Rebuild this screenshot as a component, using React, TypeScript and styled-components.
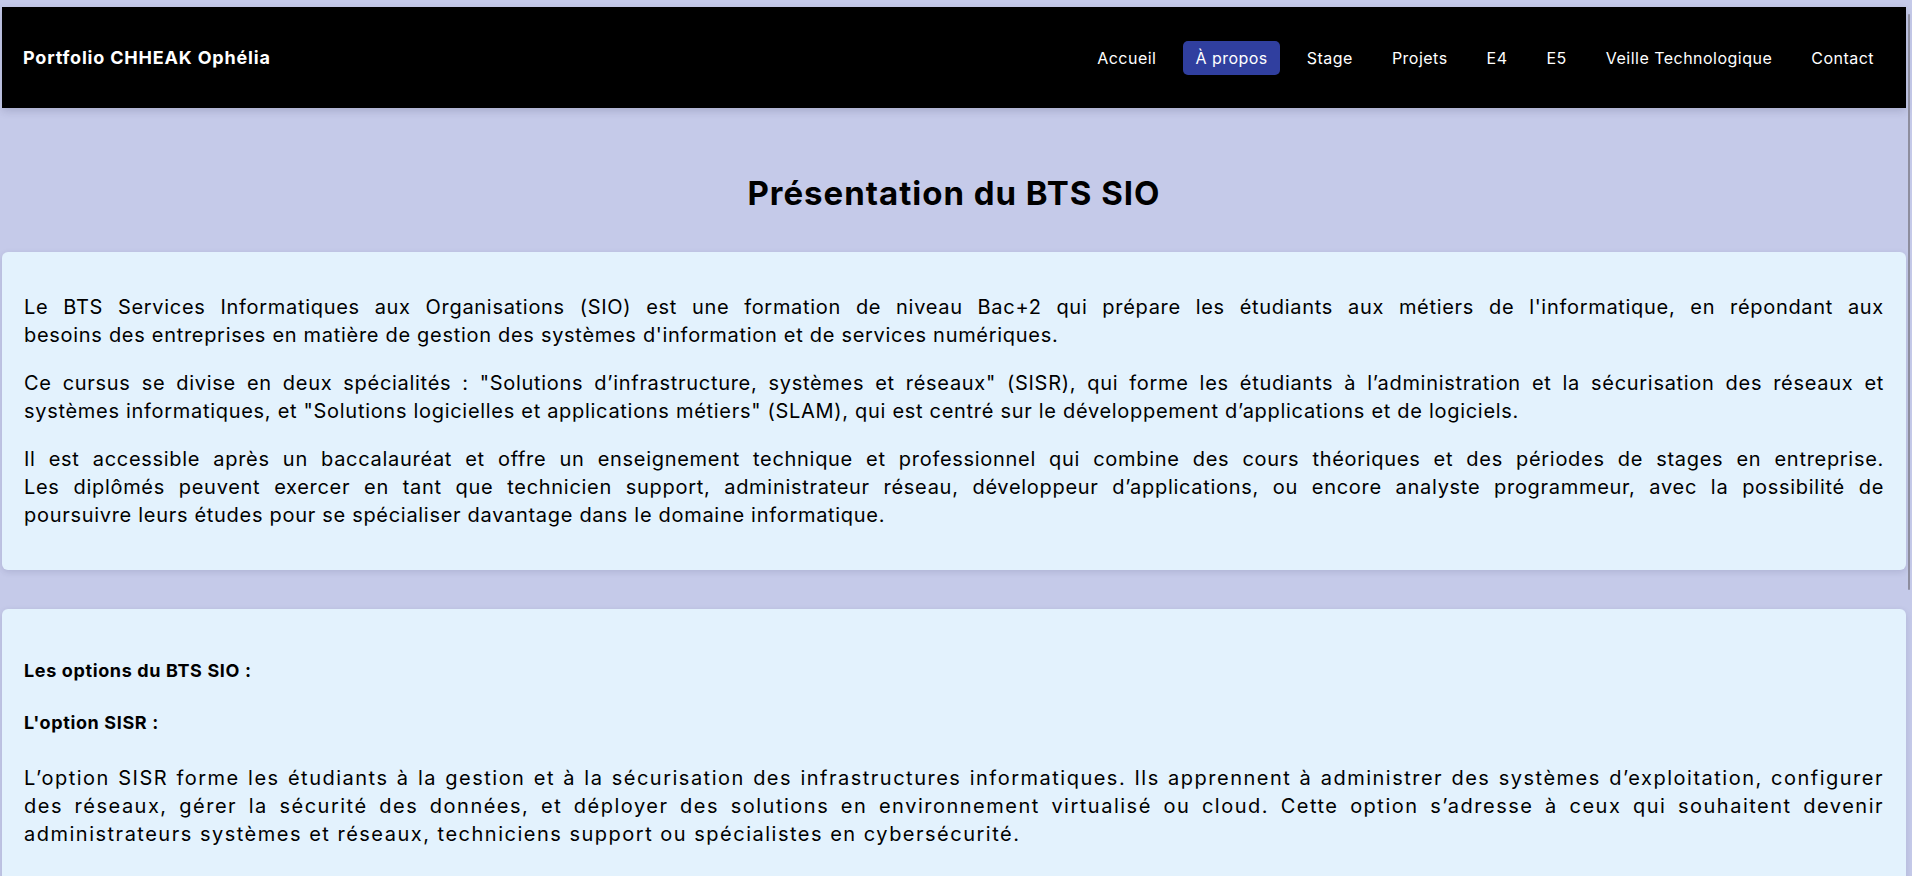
import React from "react";
import styled, { createGlobalStyle } from "styled-components";

const GlobalStyle = createGlobalStyle`
  * { box-sizing: border-box; }
  html, body {
    margin: 0;
    padding: 0;
    background: #c5cae9;
  }
  body {
    font-family: Inter, "Noto Sans", "DejaVu Sans", sans-serif;
    color: #000;
    letter-spacing: 0.04em;
    overflow: hidden;
  }
`;

const Page = styled.div`
  padding: 7px 6px 0 2px;
  min-height: 876px;
`;

const NavBar = styled.header`
  height: 101px;
  background: #000;
  display: flex;
  align-items: center;
  justify-content: space-between;
  padding: 0 20px 0 21px;
  box-shadow: 0 3px 8px rgba(40, 40, 80, 0.18);
`;

const Brand = styled.div`
  color: #fff;
  font-weight: 700;
  font-size: 18px;
  line-height: 22px;
  letter-spacing: 0.045em;
`;

const NavList = styled.nav`
  display: flex;
  align-items: center;
  gap: 15px;
`;

const NavLink = styled.a<{ $active?: boolean }>`
  display: block;
  color: #fff;
  font-size: 16px;
  line-height: 18px;
  letter-spacing: 0.03em;
  padding: 8px 12px;
  border-radius: 5px;
  text-decoration: none;
  background: ${(p) => (p.$active ? "#303f9f" : "transparent")};
`;

const Title = styled.h1`
  margin: 65px 0 39px;
  text-align: center;
  font-size: 33px;
  line-height: 40px;
  font-weight: 700;
  letter-spacing: 0.03em;
`;

const Card = styled.section`
  background: #e3f2fd;
  border-radius: 6px;
  padding: 21px 22px;
  margin-bottom: 39px;
  box-shadow: 0 2px 6px rgba(40, 40, 90, 0.14);
`;

const Para = styled.p<{ $spacing: number }>`
  margin: 20px 0;
  font-size: 20px;
  letter-spacing: ${(p) => p.$spacing}px;
  line-height: 28px;
`;

const Line = styled.span<{ $last?: boolean }>`
  display: block;
  white-space: nowrap;
  text-align: justify;
  text-align-last: ${(p) => (p.$last ? "left" : "justify")};
`;

const Label = styled.h4`
  margin: 30px 0;
  font-size: 18px;
  line-height: 22px;
  font-weight: 700;
  letter-spacing: 0.035em;
`;

const ScrollThumb = styled.div`
  position: fixed;
  top: 14px;
  right: 2px;
  width: 2px;
  height: 576px;
  border-radius: 1px;
  background: #8d8d9e;
`;

const links = [
  "Accueil",
  "À propos",
  "Stage",
  "Projets",
  "E4",
  "E5",
  "Veille Technologique",
  "Contact",
];

const JustifiedText: React.FC<{ lines: string[]; spacing: number }> = ({ lines, spacing }) => (
  <Para $spacing={spacing}>
    {lines.map((l, i) => (
      <Line key={i} $last={i === lines.length - 1}>
        {l}
      </Line>
    ))}
  </Para>
);

export default function App() {
  return (
    <>
      <GlobalStyle />
      <Page>
        <NavBar>
          <Brand>Portfolio CHHEAK Ophélia</Brand>
          <NavList>
            {links.map((l) => (
              <NavLink key={l} href="#" $active={l === "À propos"}>
                {l}
              </NavLink>
            ))}
          </NavList>
        </NavBar>

        <Title>Présentation du BTS SIO</Title>

        <Card>
          <JustifiedText
            spacing={0.7}
            lines={[
              "Le BTS Services Informatiques aux Organisations (SIO) est une formation de niveau Bac+2 qui prépare les étudiants aux métiers de l'informatique, en répondant aux",
              "besoins des entreprises en matière de gestion des systèmes d'information et de services numériques.",
            ]}
          />
          <JustifiedText
            spacing={0.7}
            lines={[
              "Ce cursus se divise en deux spécialités : \"Solutions d’infrastructure, systèmes et réseaux\" (SISR), qui forme les étudiants à l’administration et la sécurisation des réseaux et",
              "systèmes informatiques, et \"Solutions logicielles et applications métiers\" (SLAM), qui est centré sur le développement d’applications et de logiciels.",
            ]}
          />
          <JustifiedText
            spacing={0.7}
            lines={[
              "Il est accessible après un baccalauréat et offre un enseignement technique et professionnel qui combine des cours théoriques et des périodes de stages en entreprise.",
              "Les diplômés peuvent exercer en tant que technicien support, administrateur réseau, développeur d’applications, ou encore analyste programmeur, avec la possibilité de",
              "poursuivre leurs études pour se spécialiser davantage dans le domaine informatique.",
            ]}
          />
        </Card>

        <Card>
          <Label>Les options du BTS SIO :</Label>
          <Label>L'option SISR :</Label>
          <JustifiedText
            spacing={1.5}
            lines={[
              "L’option SISR forme les étudiants à la gestion et à la sécurisation des infrastructures informatiques. Ils apprennent à administrer des systèmes d’exploitation, configurer",
              "des réseaux, gérer la sécurité des données, et déployer des solutions en environnement virtualisé ou cloud. Cette option s’adresse à ceux qui souhaitent devenir",
              "administrateurs systèmes et réseaux, techniciens support ou spécialistes en cybersécurité.",
            ]}
          />
        </Card>
      </Page>
      <ScrollThumb />
    </>
  );
}
